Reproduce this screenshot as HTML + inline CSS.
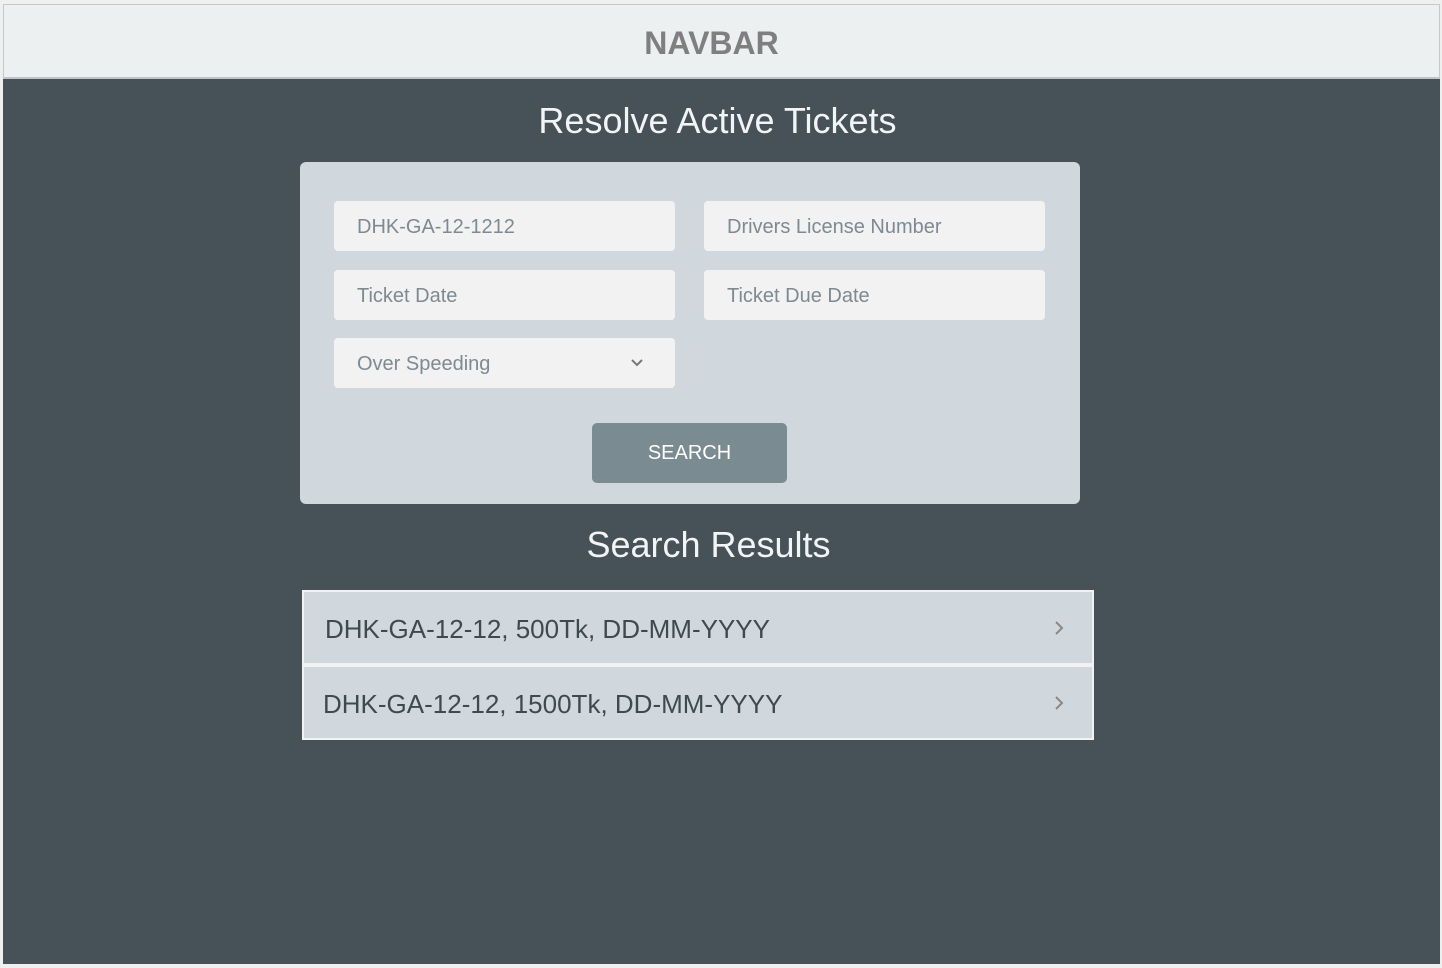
<!DOCTYPE html>
<html><head><style>
*{box-sizing:border-box;margin:0;padding:0}
body{width:1442px;height:968px;background:#eef0f0;font-family:"Liberation Sans",sans-serif;position:relative;overflow:hidden}
.nav{position:absolute;left:3px;top:4px;width:1437px;height:75px;background:#ecf0f1;border:1px solid #c8c8c8;border-bottom:2px solid #c0c4c6;text-align:center;font-size:32px;font-weight:bold;color:#7f7f7f;line-height:76px;padding-right:20px}
.main{position:absolute;left:3px;top:79px;width:1437px;height:885px;background:#465257}
h1{position:absolute;left:0;width:1437px;text-align:center;color:#f2f4f5;font-weight:normal;font-size:36px}
.card{position:absolute;left:297px;top:83px;width:780px;height:342px;background:#d0d8de;border-radius:6px}
.in{position:absolute;width:341px;height:50px;background:#f2f2f2;border-radius:4px;color:#7d8a91;font-size:20px;padding-left:23px;line-height:52px}
.btn{position:absolute;left:292px;top:261px;width:195px;height:60px;background:#7b8b92;border-radius:5px;color:#fff;font-size:20px;text-align:center;line-height:60px}
.row{position:absolute;left:299px;width:792px;height:75px;background:#d0d8de;border:2px solid #f0f2f3;color:#3e4a50;font-size:26px;line-height:74px;padding-left:21px}
.row svg{position:absolute;right:28px;top:28px}
</style></head><body>
<div class="nav">NAVBAR</div>
<div class="main">
<h1 style="top:21px;padding-right:8px">Resolve Active Tickets</h1>
<div class="card">
<div class="in" style="left:34px;top:39px">DHK-GA-12-1212</div>
<div class="in" style="left:404px;top:39px">Drivers License Number</div>
<div class="in" style="left:34px;top:108px">Ticket Date</div>
<div class="in" style="left:404px;top:108px">Ticket Due Date</div>
<div class="in" style="left:34px;top:176px">Over Speeding<svg style="position:absolute;left:297px;top:21px" width="12" height="8" viewBox="0 0 12 8"><path d="M1 1l5 5 5-5" stroke="#777" stroke-width="2" fill="none"/></svg></div>
<div class="btn">SEARCH</div>
</div>
<h1 style="top:445px;padding-right:26px">Search Results</h1>
<div class="row" style="top:511px">DHK-GA-12-12, 500Tk, DD-MM-YYYY<svg width="10" height="16" viewBox="0 0 10 16"><path d="M2 2l6 6-6 6" stroke="#888" stroke-width="2" fill="none"/></svg></div>
<div class="row" style="top:586px;padding-left:19px">DHK-GA-12-12, 1500Tk, DD-MM-YYYY<svg width="10" height="16" viewBox="0 0 10 16"><path d="M2 2l6 6-6 6" stroke="#888" stroke-width="2" fill="none"/></svg></div>
</div>
</body></html>
